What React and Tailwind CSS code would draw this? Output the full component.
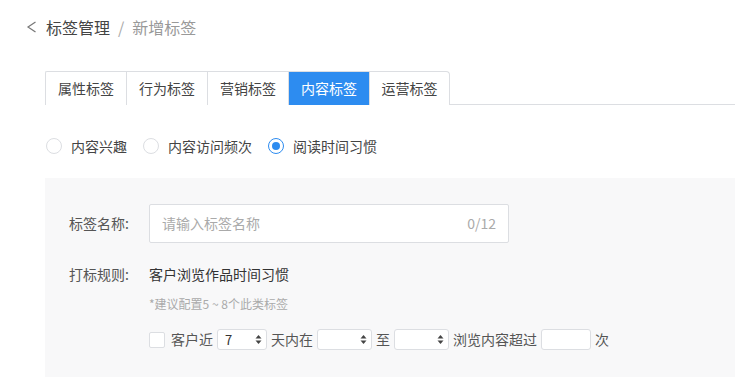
import { useState } from "react";

const tabs = ["属性标签", "行为标签", "营销标签", "内容标签", "运营标签"];
const types = ["内容兴趣", "内容访问频次", "阅读时间习惯"];

export default function App() {
  const [tab, setTab] = useState(3);
  const [type, setType] = useState(2);
  const [name, setName] = useState("");

  return (
    <div
      className="min-h-[390px] bg-white text-[14px] text-[#333] overflow-hidden"
      style={{ fontFamily: '"Noto Sans CJK SC", "Noto Sans", sans-serif' }}
    >
      {/* 面包屑 */}
      <div className="flex items-center h-[52px] pl-[26px] pt-[1px]">
        <svg width="12" height="14" viewBox="0 0 12 14" className="mr-[8px]">
          <path d="M9.5 2 L2 7 L9.5 12" fill="none" stroke="#777" strokeWidth="1.2" />
        </svg>
        <span className="text-[16px] text-[#444]">标签管理</span>
        <span className="text-[16px] text-[#aaa] mx-[8px]">/</span>
        <span className="text-[16px] text-[#999]">新增标签</span>
      </div>

      <div className="pl-[45px] pt-[19px]">
        {/* Tabs */}
        <div className="flex border-b border-[#dcdee2]">
          {tabs.map((t, i) => (
            <button
              key={t}
              onClick={() => setTab(i)}
              className={
                "w-[81px] h-[34px] flex items-center justify-center border-t border-l border-[#dcdee2] -mb-px " +
                (i === tabs.length - 1 ? "border-r rounded-tr-[4px] " : "") +
                (i === 0 ? "rounded-tl-[2px] " : "") +
                (tab === i
                  ? "bg-[#2d8cf0] text-white border-[#2d8cf0]"
                  : "bg-white text-[#444]")
              }
            >
              {t}
            </button>
          ))}
        </div>

        {/* 类型 */}
        <div className="flex items-center h-[44px] mt-[19px] pl-[1px]">
          {types.map((t, i) => (
            <label
              key={t}
              onClick={() => setType(i)}
              className="flex items-center mr-[16px] cursor-pointer"
            >
              <span
                className={
                  "w-[16px] h-[16px] rounded-full border flex items-center justify-center bg-white " +
                  (type === i ? "border-[#2d8cf0]" : "border-[#dcdee2]")
                }
              >
                {type === i && <span className="w-[8px] h-[8px] rounded-full bg-[#2d8cf0]" />}
              </span>
              <span className="ml-[9px] text-[#444]">{t}</span>
            </label>
          ))}
        </div>

        {/* 表单区域 */}
        <div className="bg-[#f8f8f9] mt-[10px] h-[199px] pl-[24px] pt-[26px]">
          <div className="flex items-center">
            <span className="w-[80px] text-[#555]">标签名称:</span>
            <div className="w-[360px] h-[39px] bg-white border border-[#dcdee2] rounded-[2px] flex items-center pl-[12px] pr-[12px]">
              <input
                value={name}
                maxLength={12}
                onChange={(e) => setName(e.target.value)}
                placeholder="请输入标签名称"
                className="flex-1 outline-none bg-transparent placeholder:text-[#aaa]"
              />
              <span className="text-[#aaa]">{name.length}/12</span>
            </div>
          </div>

          <div className="flex items-center mt-[21px]">
            <span className="w-[80px] text-[#555]">打标规则:</span>
            <span className="text-[#333]">客户浏览作品时间习惯</span>
          </div>
          <div className="pl-[80px] mt-[10px] text-[12px] text-[#aaa]">*建议配置5 ~ 8个此类标签</div>

          <div className="flex items-center pl-[80px] mt-[16px] text-[#555]">
            <span className="w-[16px] h-[16px] border border-[#dcdee2] bg-white rounded-[2px] mr-[6px]" />
            <span>客户近</span>
            <Select w="w-[50px]" value="7" />
            <span>天内在</span>
            <Select w="w-[55px]" value="" />
            <span>至</span>
            <Select w="w-[55px]" value="" />
            <span>浏览内容超过</span>
            <input className="w-[50px] h-[21px] mx-[4px] bg-white border border-[#dcdee2] rounded-[3px] outline-none" />
            <span>次</span>
          </div>
        </div>
      </div>
    </div>
  );
}

function Select({ w, value }) {
  return (
    <div
      className={
        w +
        " h-[21px] mx-[4px] bg-white border border-[#dcdee2] rounded-[3px] flex items-center justify-between pl-[7px] pr-[4px] text-[13px] text-[#333]"
      }
    >
      <span>{value}</span>
      <svg width="7" height="11" viewBox="0 0 7 11">
        <path d="M3.5 1 L6.5 4.5 L0.5 4.5 Z" fill="#444" />
        <path d="M3.5 10 L6.5 6.5 L0.5 6.5 Z" fill="#444" />
      </svg>
    </div>
  );
}
